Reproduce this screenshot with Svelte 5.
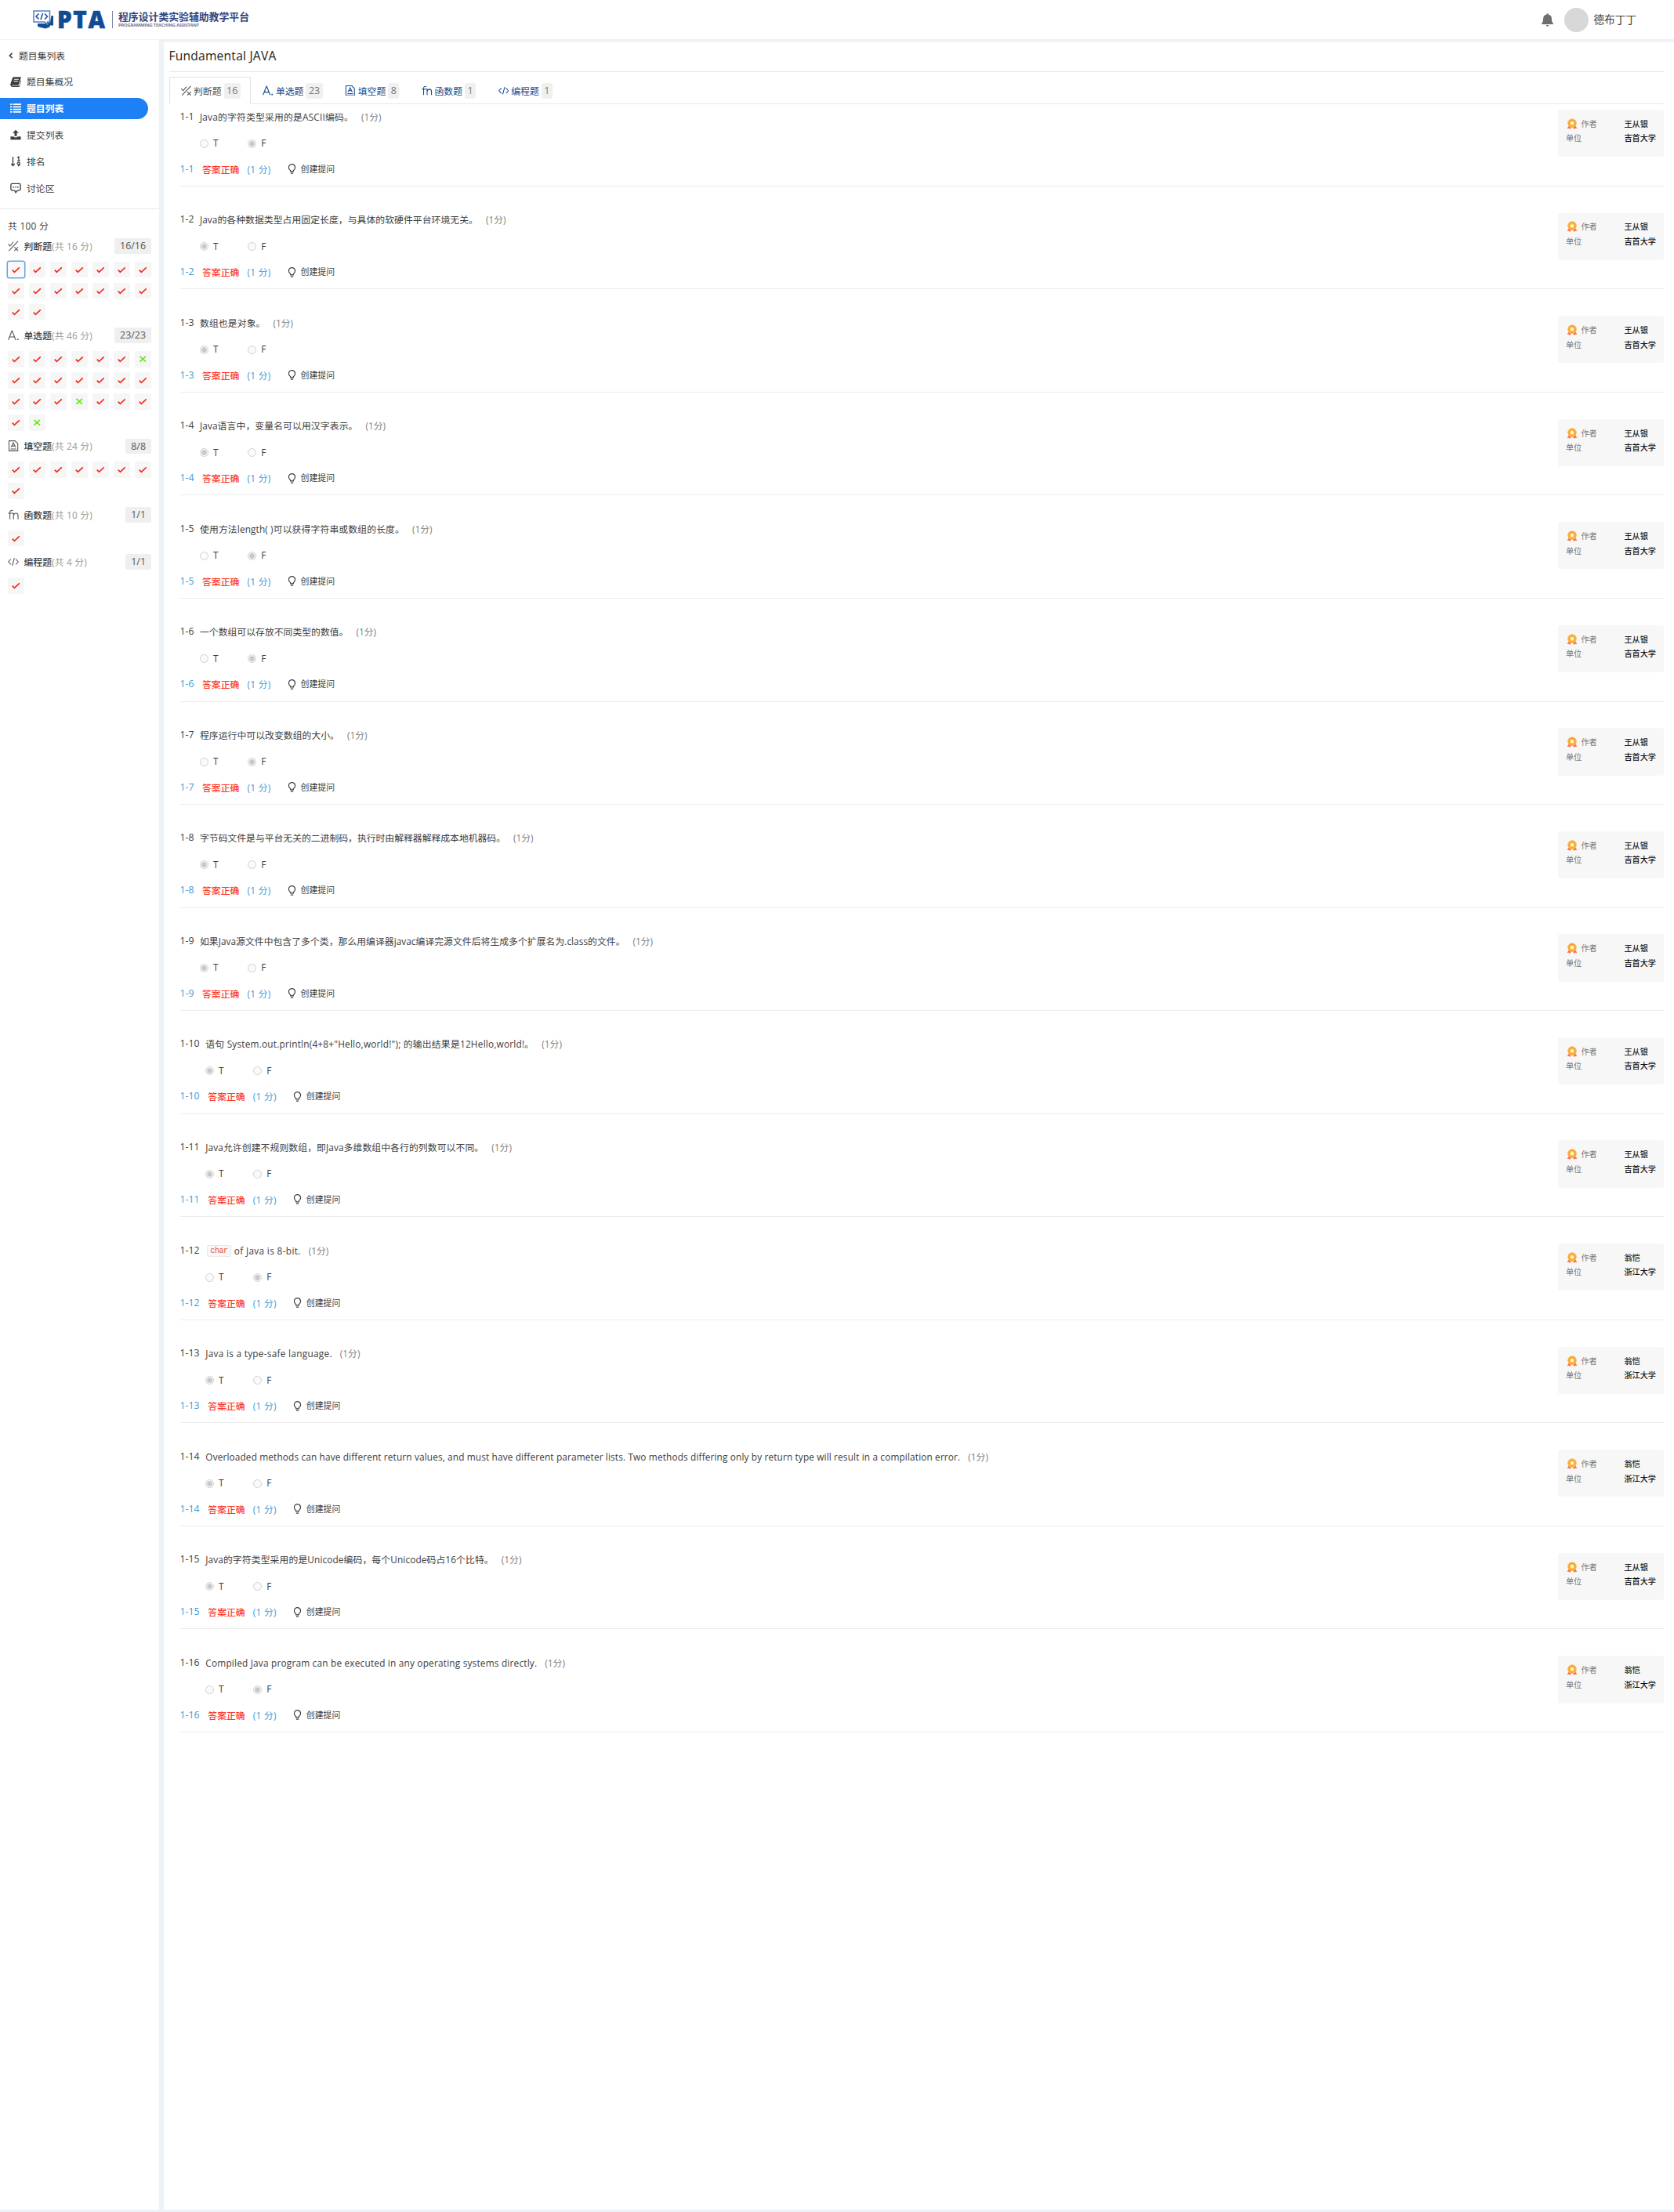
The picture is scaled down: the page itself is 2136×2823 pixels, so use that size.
<script>
  // Spreads a line of text over the given width by adjusting its tracking.
  function fit(node, width) {
    const count = [...node.textContent].length;
    const natural = node.getBoundingClientRect().width;
    node.style.letterSpacing = (width - natural) / count + 'px';
  }

  const nav = [
    { icon: 'book', label: '题目集概况' },
    { icon: 'list', label: '题目列表', active: true },
    { icon: 'upload', label: '提交列表' },
    { icon: 'rank', label: '排名' },
    { icon: 'chat', label: '讨论区' }
  ];

  const groups = [
    { icon: 'judge', label: '判断题', score: '(共 16 分)', w: 52, done: '16/16', count: 16, wrong: [] },
    { icon: 'single', label: '单选题', score: '(共 46 分)', w: 52, done: '23/23', count: 23, wrong: [6, 17, 22] },
    { icon: 'blank', label: '填空题', score: '(共 24 分)', w: 52, done: '8/8', count: 8, wrong: [] },
    { icon: 'fn', label: '函数题', score: '(共 10 分)', w: 52, done: '1/1', count: 1, wrong: [] },
    { icon: 'code', label: '编程题', score: '(共 4 分)', w: 45, done: '1/1', count: 1, wrong: [] }
  ];

  const tabs = [
    { icon: 'judge', label: '判断题', count: 16, active: true },
    { icon: 'single', label: '单选题', count: 23 },
    { icon: 'blank', label: '填空题', count: 8 },
    { icon: 'fn', label: '函数题', count: 1 },
    { icon: 'code', label: '编程题', count: 1 }
  ];

  const jishou = ['王从银', '吉首大学'];
  const zheda = ['翁恺', '浙江大学'];

  const questions = [
    { text: 'Java的字符类型采用的是ASCII编码。', w: 196, answer: 'F', by: jishou },
    { text: 'Java的各种数据类型占用固定长度，与具体的软硬件平台环境无关。', w: 355, answer: 'T', by: jishou },
    { text: '数组也是对象。', w: 83.5, answer: 'T', by: jishou },
    { text: 'Java语言中，变量名可以用汉字表示。', w: 201.5, answer: 'T', by: jishou },
    { text: '使用方法length( )可以获得字符串或数组的长度。', w: 261, answer: 'F', by: jishou },
    { text: '一个数组可以存放不同类型的数值。', w: 189.5, answer: 'F', by: jishou },
    { text: '程序运行中可以改变数组的大小。', w: 178, answer: 'F', by: jishou },
    { text: '字节码文件是与平台无关的二进制码，执行时由解释器解释成本地机器码。', w: 390, answer: 'T', by: jishou },
    { text: '如果Java源文件中包含了多个类，那么用编译器javac编译完源文件后将生成多个扩展名为.class的文件。', w: 542.5, answer: 'T', by: jishou },
    { text: '语句 System.out.println(4+8+"Hello,world!"); 的输出结果是12Hello,world!。', w: 419, answer: 'T', by: jishou },
    { text: 'Java允许创建不规则数组，即Java多维数组中各行的列数可以不同。', w: 355, answer: 'T', by: jishou },
    { code: 'char', text: 'of Java is 8-bit.', w: 85, answer: 'F', by: zheda },
    { text: 'Java is a type-safe language.', w: 161.5, answer: 'T', by: zheda },
    { text: 'Overloaded methods can have different return values, and must have different parameter lists. Two methods differing only by return type will result in a compilation error.', w: 963, answer: 'T', by: zheda },
    { text: 'Java的字符类型采用的是Unicode编码，每个Unicode码占16个比特。', w: 367.5, answer: 'T', by: jishou },
    { text: 'Compiled Java program can be executed in any operating systems directly.', w: 423, answer: 'F', by: zheda }
  ];
</script>

{#snippet icon(name)}
  <svg class="icon {name}" viewBox="0 0 16 16" aria-hidden="true">
    {#if name === 'back'}
      <path class="s thick" d="M10.5 3 5.5 8l5 5" />
    {:else if name === 'book'}
      <path d="M5 1.5h10.2q.8 0 .5.9l-3.1 10q-.3.9-1.2.9H2.7q-.8 0-.6.6.2.5 1 .5h9.3q.7 0 1-.8l2.4-8q.7.4.4 1.300l-2.400 7.900q-.4 1.300-1.600 1.300H2.700Q.7 15.200.3 13.200q-.2-1 .2-2L3.300 3q.5-1.300 1.700-1.500zM6 4.300l-.4 1.200h6.600l.4-1.200zM5.200 7l-.4 1.200h6.600l.4-1.200z" fill-rule="evenodd" />
    {:else if name === 'list'}
      <path d="M0 1.500h2.500v2H0zM4 1.500h12v2H4zM0 5.200h2.500v2H0zM4 5.200h12v2H4zM0 8.900h2.500v2H0zM4 8.900h12v2H4zM0 12.600h2.500v2H0zM4 12.600h12v2H4z" />
    {:else if name === 'upload'}
      <path d="M8 .8 12.500 5.500H9.700V10H6.300V5.500H3.500zM.5 10.500h4.500q.5 1.500 3 1.500t3-1.500h4.500v4.700H.5z" />
    {:else if name === 'rank'}
      <path class="s" d="M4 1v13M1.500 11.500 4 14.200l2.500-2.700M10.500 2.500 12.500 1.300V7M10.500 7h4M14 11.200a1.700 1.700 0 1 1-.2-1c.6 2-.2 3.800-2.500 4.500" />
    {:else if name === 'chat'}
      <path class="s" d="M3 1.500h10q2 0 2 2v6q0 2-2 2h-2.500L8 14.500 6.500 11.500H3q-2 0-2-2v-6q0-2 2-2z" />
      <path d="M4 5.700h1.700v1.700H4zM7.200 5.700h1.700v1.700H7.200zM10.400 5.700h1.700v1.700h-1.700z" />
    {:else if name === 'judge'}
      <path class="s thin" d="M.5 5l2.800 3L8 2M14.800 1 1.500 15M9.500 9.500l5.500 5.500M15 9.500l-5.500 5.500" />
    {:else if name === 'single'}
      <path class="s thin" d="M.8 14.500 5.800 1.500h.6l5 13M2.800 10.200h6.800" />
      <path d="M13.500 12.800h2v2h-2z" />
    {:else if name === 'blank'}
      <path class="s thin" d="M1.700.7h8.800l4 4v10.600H1.700zM4.800 10 8 3.500l3.200 6.500M5.800 8.100h4.400M4 12.600h8.300" />
    {:else if name === 'fn'}
      <path class="s thin" d="M7.300 1.800Q3 .8 3 4.500V14.500M.3 5.700h8v8.800M8.300 9q1-3.200 3.700-3.200t2.900 2.900v5.800" />
    {:else if name === 'code'}
      <path class="s thin" d="M4.500 4 .8 8l3.700 4M11.500 4l3.700 4-3.700 4M9.500 2.500l-3 11" />
    {:else if name === 'check'}
      <path class="s thick" d="M1.200 8.500 5.200 12.800 15 3.500" />
    {:else if name === 'cross'}
      <path class="s thick" d="M2.200 2.700 13.800 13.300M13.800 2.700 2.200 13.300" />
    {:else if name === 'bulb'}
      <path class="s" d="M5.800 12.200V10.800Q3 8.800 3 5.800a5 5.100 0 0 1 10 0q0 3-2.800 5v1.400zM6 15h4" />
    {:else if name === 'bell'}
      <path d="M8 .3q1 0 1.100 1.100 4 .9 4 5.200 0 4.200 1.900 5.500v1H1v-1q1.900-1.300 1.900-5.500 0-4.300 4-5.200Q7 .3 8 .3zM6.300 14h3.400q-.2 1.700-1.700 1.700T6.300 14z" />
    {:else if name === 'medal'}
      <path class="ribbon" d="M3.500 10 .8 14.800l2.500-.3L4.800 16 7.200 12.500zM12.500 10l2.700 4.800-2.500-.3L11.200 16 8.800 12.500z" />
      <circle class="rim" cx="8" cy="7" r="6.600" />
      <circle class="disc" cx="8" cy="7" r="4.500" />
      <path class="star" d="m8 4 .9 1.900 2.100.3-1.500 1.400.4 2.100L8 8.700l-1.900 1 .4-2.100L5 6.200l2.100-.3z" />
    {/if}
  </svg>
{/snippet}

<div class="page">
  <header>
    <svg class="mark" viewBox="0 0 27 24" aria-hidden="true">
      <path class="navy" d="M23.500 7H26v12.500h-4.500v2L16 23.500 6 21v-4h12l4-2z" />
      <path class="screen" d="M1 1h20.500v14h-3v3l-3.500-3H1z" />
      <path class="glyph" d="M7.500 4.500 4 8l3.500 3.500M15 4.500 18.500 8 15 11.500M12.500 4l-2.500 8" />
    </svg>
    <b class="pta"><span use:fit={62.5}>PTA</span></b>
    <i class="bar"></i>
    <div class="slogan">
      <b>程序设计类实验辅助教学平台</b>
      <small><span use:fit={103}>PROGRAMMING TEACHING ASSISTANT</span></small>
    </div>
    <div class="user">
      {@render icon('bell')}
      <i class="avatar"></i>
      <span>德布丁丁</span>
    </div>
  </header>

  <div class="body">
    <aside>
      <nav>
        <a class="back-link">{@render icon('back')}<span>题目集列表</span></a>
        {#each nav as n}
          <a class:active={n.active}>{@render icon(n.icon)}<span>{n.label}</span></a>
        {/each}
      </nav>
      <div class="total"><span use:fit={52}>共 100 分</span></div>
      {#each groups as g, gi}
        <section>
          <div class="ghead">
            {@render icon(g.icon)}
            <span class="name">{g.label}</span><span class="pts" use:fit={g.w}>{g.score}</span>
            <span class="done">{g.done}</span>
          </div>
          <div class="cells">
            {#each Array(g.count) as _, i}
              {@const bad = g.wrong.includes(i)}
              <span class="cell" class:bad class:current={gi === 0 && i === 0}>{@render icon(bad ? 'cross' : 'check')}</span>
            {/each}
          </div>
        </section>
      {/each}
    </aside>

    <main>
      <h1><span use:fit={137}>Fundamental JAVA</span></h1>
      <div class="tabs">
        {#each tabs as t}
          <div class="tab" class:on={t.active}>
            {@render icon(t.icon)}<span>{t.label}</span><em>{t.count}</em>
          </div>
        {/each}
      </div>
      {#each questions as q, i}
        {@const wide = i > 8}
        <article class:wide>
          <div class="content">
            <div class="row">
              <span class="no">1-{i + 1}</span>
              {#if q.code}<code>{q.code}</code>{/if}
              <span class="text" use:fit={q.w}>{q.text}</span>
              <span class="score">(1分)</span>
            </div>
            <div class="row options">
              {#each ['T', 'F'] as o}
                <span class="option"><i class:chosen={q.answer === o}></i>{o}</span>
              {/each}
            </div>
            <div class="row result">
              <span class="no">1-{i + 1}</span>
              <span class="right">答案正确</span>
              <span class="got" use:fit={30}>(1 分)</span>
              {@render icon('bulb')}
              <span class="ask">创建提问</span>
            </div>
          </div>
          <div class="card">
            <div><span>{@render icon('medal')}作者</span><b>{q.by[0]}</b></div>
            <div><span>单位</span><b class="org">{q.by[1]}</b></div>
          </div>
        </article>
      {/each}
    </main>
  </div>
</div>

<style>
  :global(body) {
    margin: 0;
    background: #fff;
  }
  .page {
    width: 2136px;
    height: 2823px;
    box-sizing: border-box;
    overflow: hidden;
    border-bottom: 3px solid #edf2f6;
    display: flex;
    flex-direction: column;
    background: #fff;
    color: #3d3d3d;
    font: 11.83px/18px 'Open Sans', 'Noto Sans CJK SC', sans-serif;
    white-space: nowrap;
  }
  span,
  b {
    display: inline-block;
  }
  .icon {
    width: 13px;
    height: 13px;
    flex: none;
    fill: currentColor;
  }
  .s {
    fill: none;
    stroke: currentColor;
    stroke-width: 1.5;
  }
  .thin {
    stroke-width: 1.25;
  }
  .thick {
    stroke-width: 2.6;
  }

  /* header */
  header {
    height: 50px;
    flex: none;
    display: flex;
    align-items: center;
    padding: 0 45.5px 0 42px;
    box-sizing: border-box;
  }
  .mark {
    width: 27px;
    height: 24px;
    margin-right: 4px;
  }
  .navy {
    fill: #134c97;
  }
  .screen {
    fill: #fff;
    stroke: #5583bd;
    stroke-width: 1.5;
  }
  .glyph {
    fill: none;
    stroke: #134c97;
    stroke-width: 1.5;
  }
  .pta {
    width: 69.5px;
    color: #114b96;
    font-size: 29.5px;
    line-height: 30px;
    font-weight: 800;
    -webkit-text-stroke: 0.6px #114b96;
  }
  .bar {
    width: 1.5px;
    height: 22px;
    background: #7d87a8;
  }
  .slogan {
    display: flex;
    flex-direction: column;
    margin-left: 7px;
    color: #35437a;
  }
  .slogan b {
    font-size: 12.85px;
    line-height: 15px;
    height: 14.5px;
  }
  .slogan small {
    font-size: 5.8px;
    line-height: 7px;
    font-weight: 700;
    color: #6b759c;
  }
  .user {
    margin-left: auto;
    display: flex;
    align-items: center;
  }
  .user .icon {
    width: 17px;
    height: 17px;
    color: #6f6f6f;
  }
  .avatar {
    width: 31px;
    height: 31px;
    margin: 0 6.5px 0 13px;
    border-radius: 50%;
    background: #d8d8d8;
  }
  .user span {
    width: 57px;
    font-size: 13.6px;
  }

  .body {
    flex: 1;
    display: flex;
  }

  /* sidebar */
  aside {
    width: 203px;
    flex: none;
    box-sizing: border-box;
    border-top: 1px solid #f3f3f3;
  }
  nav {
    box-sizing: border-box;
    padding-top: 6px;
    height: 216px;
    border-bottom: 1px solid #e8e8e8;
  }
  nav a {
    display: flex;
    align-items: center;
    height: 27px;
    width: 189px;
    box-sizing: border-box;
    margin-bottom: 6.9px;
    padding-left: 13px;
  }
  nav a .icon {
    width: 14px;
    height: 14px;
    margin-right: 7px;
  }
  nav .back-link {
    padding-left: 9px;
  }
  nav .back-link .icon {
    width: 10px;
    height: 10px;
    margin-right: 5px;
  }
  nav .active {
    background: #1e80f5;
    color: #fff;
    font-weight: 700;
    border-radius: 0 14px 14px 0;
  }
  .total {
    box-sizing: border-box;
    padding: 12px 0 0 10px;
    height: 37.2px;
  }
  section {
    padding: 0 10px;
  }
  .ghead {
    display: flex;
    align-items: center;
    height: 19.6px;
    margin-bottom: 10.1px;
  }
  .ghead .icon {
    width: 14px;
    height: 14px;
    margin-right: 6.5px;
    color: #555;
  }
  .ghead .name {
    font-weight: 500;
  }
  .pts {
    color: #999;
  }
  .done {
    margin-left: auto;
    padding: 0 7px;
    line-height: 19.6px;
    font-size: 12.4px;
    background: #efefef;
    border-radius: 2px;
    color: #555;
  }
  .cells {
    display: grid;
    grid-template-columns: repeat(7, 20.6px);
    grid-auto-rows: 20.6px;
    gap: 6.4px;
    padding-bottom: 10px;
  }
  .cell {
    display: flex;
    align-items: center;
    justify-content: center;
    background: #f6f6f6;
    border-radius: 2px;
    color: #f02b22;
  }
  .cell .icon {
    width: 10.5px;
    height: 10.5px;
  }
  .cell.bad {
    color: #63ea1c;
  }
  .cell.current {
    background: #f8f8f8;
    box-shadow: 0 0 0 1.5px #6ba1e4;
  }

  /* main column */
  main {
    flex: 1;
    min-width: 0;
    border-left: 6.5px solid #edf2f6;
    padding: 0 13px 0 6.5px;
    box-shadow: inset 0 3.5px #f0f1f2;
  }
  h1 {
    margin: 0;
    height: 41px;
    line-height: 42px;
    font-size: 15.6px;
    font-weight: 400;
    color: #222;
    border-bottom: 1px solid #e3e5e8;
  }
  .tabs {
    display: flex;
    height: 34px;
    margin-top: 6px;
    border-bottom: 1px solid #e4e7ec;
  }
  .tab {
    display: flex;
    align-items: center;
    box-sizing: border-box;
    height: 35px;
    padding: 0 12.6px 0 14px;
    border: 1px solid transparent;
    color: #12498e;
  }
  .tab.on {
    border-color: #e0e3e7;
    border-bottom-color: #fff;
    background: #fff;
    color: #505050;
  }
  .tab .icon {
    width: 13.5px;
    height: 13.5px;
    margin-right: 3px;
  }
  .tab em {
    margin-left: 3px;
    padding: 0 3.5px;
    font-style: normal;
    line-height: 20px;
    border-radius: 3px;
    background: #f0f0f0;
    color: #777;
    font-size: 12.5px;
  }
  article {
    display: flex;
    justify-content: space-between;
    align-items: flex-start;
    box-sizing: border-box;
    height: 104.8px;
    margin: 0 0 26.75px 14px;
    border-bottom: 1.2px solid #ececec;
  }
  .content {
    display: grid;
    grid-template-rows: 33px 34px 33px;
    margin-top: -1px;
  }
  .row {
    display: flex;
    align-items: center;
  }
  .no {
    width: 25.5px;
    font-size: 12.3px;
  }
  .wide .no {
    width: 32.8px;
  }
  .text {
    margin-right: 10px;
  }
  .score {
    color: #808080;
  }
  code {
    margin: 2px 4px 0 2px;
    padding: 0 3px;
    border: 1px solid #e8e8e8;
    border-radius: 2px;
    background: #f8f8f8;
    color: #e2504c;
    font: 10px/13px 'Liberation Mono', monospace;
    letter-spacing: -0.4px;
  }
  .options {
    padding-left: 25.5px;
  }
  .wide .options {
    padding-left: 32.5px;
  }
  .option {
    display: flex;
    align-items: center;
    width: 61.2px;
  }
  .option i {
    width: 9px;
    height: 9px;
    margin: 2px 6px 0 0;
    border: 1px solid #d0d0d0;
    border-radius: 50%;
    background: #fafafa;
  }
  .option .chosen {
    background: radial-gradient(#c8c8c8 0 2.8px, #f8f8f8 3.8px);
  }
  .result .no,
  .got {
    color: #3c9bd9;
  }
  .result .no {
    width: 28.5px;
  }
  .wide .result .no {
    width: 35.8px;
  }
  .right {
    width: 57.5px;
    color: #fc3a2c;
    font-weight: 500;
  }
  .result .icon {
    margin: 0 5px 0 20px;
  }
  .ask {
    font-size: 10.9px;
  }
  .card {
    width: 135px;
    height: 60.3px;
    box-sizing: border-box;
    margin-top: 7px;
    padding: 8.7px 10px;
    background: #f7f7f7;
    border-radius: 3px;
    font-size: 10.15px;
    color: #777;
  }
  .card div {
    display: flex;
    align-items: center;
    height: 18.5px;
  }
  .card span {
    display: flex;
    align-items: center;
    width: 74.5px;
  }
  .card b {
    font-weight: 500;
    color: #222;
  }
  .card .org {
    color: #111;
  }
  .card .icon {
    width: 14px;
    height: 14px;
    margin: 0 5px 0 0.5px;
  }
  .ribbon {
    fill: #fa6d4f;
  }
  .rim {
    fill: #fbbe49;
  }
  .disc {
    fill: #ffc94f;
    stroke: #f8873b;
    stroke-width: 1.2;
  }
  .star {
    fill: #fffbe0;
  }
</style>
